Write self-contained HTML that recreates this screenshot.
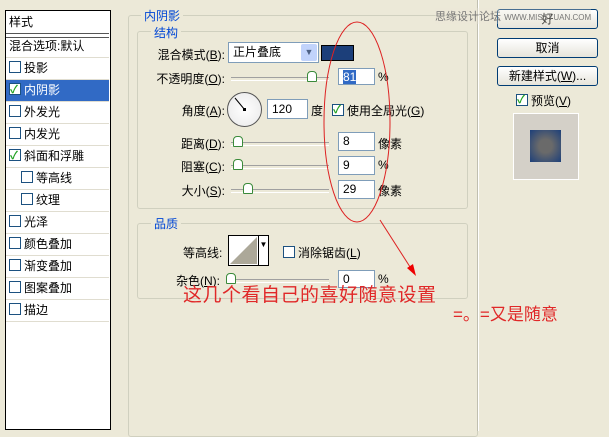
<!DOCTYPE html><html><head><meta charset="utf-8"><style>
body{margin:0;width:609px;height:431px;background:#ece9d8;position:relative;overflow:hidden;font-family:"Liberation Sans","Noto Sans CJK SC",sans-serif;font-size:12px;color:#000}
.a{position:absolute}
.row{position:absolute;left:6px;width:103px;height:21px;border-bottom:1px solid #e0ddd0;line-height:21px;font-size:12px}
.cb{display:inline-block;width:10px;height:10px;border:1px solid #1c5180;background:#fff;vertical-align:-1px;margin:0 3px 0 3px;position:relative}
.cb.on::after{content:"✓";position:absolute;left:0;top:-4px;font-size:11px;color:#21a121;font-weight:bold}
.inp{position:absolute;background:#fff;border:1px solid #7f9db9;height:17px;line-height:17px;padding-left:4px;box-sizing:border-box;font-size:12px}
.lbl{position:absolute;text-align:right;width:100px;font-size:12px}
.trk{position:absolute;height:2px;border-top:1px solid #a0a0a0;border-bottom:1px solid #fff}
.th{position:absolute;width:8px;height:9px;background:#fff;border:1px solid #3a8a3a;border-radius:4px 4px 1px 1px}
.btn{position:absolute;left:497px;width:99px;height:18px;border:1px solid #003c74;border-radius:3px;background:linear-gradient(#fff,#e6e4da);text-align:center;line-height:18px;font-size:12px}
.grp{position:absolute;border:1px solid #d0d0bf;border-radius:3px}
.gt{position:absolute;background:#ece9d8;color:#0046d5;padding:0 3px;font-size:12px}
</style></head><body>
<div class="a" style="left:5px;top:10px;width:104px;height:418px;border:1px solid #000;background:#fff"></div>
<div class="row" style="top:11px;height:22px;line-height:22px;padding-left:3px;width:100px">样式</div>
<div class="a" style="left:6px;top:33px;width:103px;height:3px;border-top:1px solid #555;border-bottom:1px solid #555"></div>
<div class="row" style="top:36px;padding-left:3px;width:100px">混合选项:默认</div>
<div class="row" style="top:58px"><span class="cb"></span>投影</div>
<div class="row" style="top:80px;background:#316ac5;color:#fff"><span class="cb on"></span>内阴影</div>
<div class="row" style="top:102px"><span class="cb"></span>外发光</div>
<div class="row" style="top:124px"><span class="cb"></span>内发光</div>
<div class="row" style="top:146px"><span class="cb on"></span>斜面和浮雕</div>
<div class="row" style="top:168px;padding-left:12px;width:91px"><span class="cb"></span>等高线</div>
<div class="row" style="top:190px;padding-left:12px;width:91px"><span class="cb"></span>纹理</div>
<div class="row" style="top:212px"><span class="cb"></span>光泽</div>
<div class="row" style="top:234px"><span class="cb"></span>颜色叠加</div>
<div class="row" style="top:256px"><span class="cb"></span>渐变叠加</div>
<div class="row" style="top:278px"><span class="cb"></span>图案叠加</div>
<div class="row" style="top:300px"><span class="cb"></span>描边</div>

<div class="grp" style="left:128px;top:15px;width:348px;height:420px"></div>
<div class="gt" style="left:141px;top:7px">内阴影</div>
<div class="grp" style="left:137px;top:31px;width:329px;height:176px"></div>
<div class="gt" style="left:151px;top:24px">结构</div>
<div class="grp" style="left:137px;top:223px;width:329px;height:74px"></div>
<div class="gt" style="left:151px;top:215px">品质</div>
<div class="a" style="left:477px;top:0;width:1px;height:431px;background:#c0bfb0;border-right:1px solid #fff"></div>

<div class="lbl" style="left:125px;top:46px">混合模式(<u>B</u>):</div>
<div class="inp" style="left:228px;top:42px;width:91px;height:21px;line-height:19px">正片叠底</div>
<div class="a" style="left:301px;top:44px;width:16px;height:17px;background:#c1d3fb;border-radius:2px;text-align:center;color:#4d6185;font-size:9px;line-height:17px">▼</div>
<div class="a" style="left:321px;top:45px;width:31px;height:14px;background:#1c3f7a;border:1px solid #000"></div>

<div class="lbl" style="left:125px;top:70px">不透明度(<u>O</u>):</div>
<div class="trk" style="left:231px;top:77px;width:98px"></div><div class="th" style="left:307px;top:71px"></div>
<div class="inp" style="left:338px;top:68px;width:37px"><span style="background:#316ac5;color:#fff">81</span></div>
<div class="a" style="left:378px;top:70px">%</div>

<div class="lbl" style="left:125px;top:102px">角度(<u>A</u>):</div>
<div class="a" style="left:227px;top:92px;width:33px;height:33px;border:1px solid #555;border-radius:50%;background:radial-gradient(#fff,#e8e8e8)"></div>
<svg class="a" style="left:227px;top:92px" width="35" height="35"><line x1="17.5" y1="17.5" x2="8" y2="6" stroke="#000"/><rect x="16" y="16" width="3" height="3"/></svg>
<div class="inp" style="left:267px;top:99px;width:41px;height:20px;line-height:18px">120</div>
<div class="a" style="left:311px;top:102px">度</div>
<div class="a" style="left:329px;top:102px"><span class="cb on"></span>使用全局光(<u>G</u>)</div>

<div class="lbl" style="left:125px;top:135px">距离(<u>D</u>):</div>
<div class="trk" style="left:231px;top:142px;width:98px"></div><div class="th" style="left:233px;top:136px"></div>
<div class="inp" style="left:338px;top:132px;width:37px;height:19px">8</div><div class="a" style="left:378px;top:135px">像素</div>
<div class="lbl" style="left:125px;top:158px">阻塞(<u>C</u>):</div>
<div class="trk" style="left:231px;top:165px;width:98px"></div><div class="th" style="left:233px;top:159px"></div>
<div class="inp" style="left:338px;top:156px;width:37px;height:19px">9</div><div class="a" style="left:378px;top:158px">%</div>
<div class="lbl" style="left:125px;top:182px">大小(<u>S</u>):</div>
<div class="trk" style="left:231px;top:189px;width:98px"></div><div class="th" style="left:243px;top:183px"></div>
<div class="inp" style="left:338px;top:180px;width:37px;height:19px">29</div><div class="a" style="left:378px;top:182px">像素</div>

<div class="a" style="left:183px;top:244px">等高线:</div>
<div class="a" style="left:228px;top:235px;width:39px;height:29px;border:1px solid #000;background:#fff"></div>
<svg class="a" style="left:229px;top:236px" width="30" height="29"><polygon points="1,28 28,1 28,28" fill="#aca899"/></svg>
<div class="a" style="left:258px;top:236px;width:9px;height:29px;border-left:1px solid #000;background:#fff;font-size:8px;line-height:18px;text-align:center">▼</div>
<div class="a" style="left:280px;top:244px"><span class="cb"></span>消除锯齿(<u>L</u>)</div>
<div class="a" style="left:176px;top:272px">杂色(<u>N</u>):</div>
<div class="trk" style="left:231px;top:279px;width:98px"></div><div class="th" style="left:226px;top:273px"></div>
<div class="inp" style="left:338px;top:270px;width:37px;height:18px">0</div><div class="a" style="left:378px;top:272px">%</div>

<div class="btn" style="top:9px">好</div>
<div class="btn" style="top:38px">取消</div>
<div class="btn" style="top:66px">新建样式(<u>W</u>)...</div>
<div class="a" style="left:513px;top:92px"><span class="cb on"></span>预览(<u>V</u>)</div>
<div class="a" style="left:513px;top:113px;width:64px;height:65px;background:#d4d0c8;border:1px solid #fff"></div>
<div class="a" style="left:530px;top:130px;width:31px;height:32px;background:radial-gradient(#6a6a6a 30%,#1c3f7a 100%)"></div>
<div class="a" style="left:435px;top:8px;color:#777;font-size:11px;background:rgba(236,233,216,.3)">思缘设计论坛 <span style="font-size:8px">WWW.MISSYUAN.COM</span></div>

<svg class="a" style="left:0;top:0" width="609" height="431"><ellipse cx="357" cy="122" rx="33" ry="100" fill="none" stroke="#d22" stroke-width="1"/><line x1="380" y1="220" x2="412" y2="270" stroke="#d22"/><polygon points="407,268 416,276 413,264" fill="#e00"/></svg>
<div class="a" style="left:183px;top:280px;color:#e02828;font-size:19px;letter-spacing:0.5px">这几个看自己的喜好随意设置</div>
<div class="a" style="left:453px;top:300px;color:#e02828;font-size:17px">=。=又是随意</div>
</body></html>
